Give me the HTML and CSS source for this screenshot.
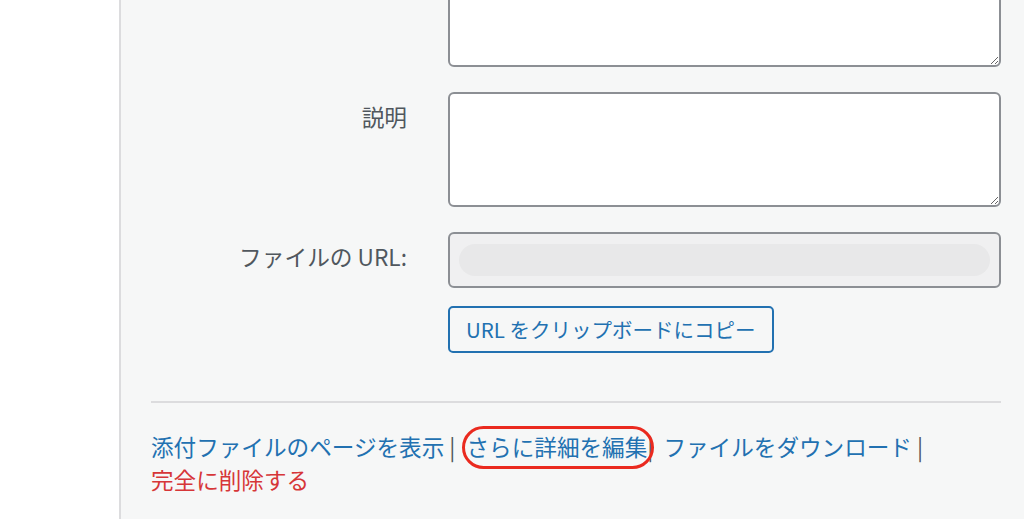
FILE: index.html
```html
<!DOCTYPE html>
<html lang="ja">
    <head>
        <meta charset="utf-8">
        <meta name="viewport" content="width=device-width, initial-scale=1.0">
        <title>添付ファイルの詳細</title>
        <link rel="stylesheet" href="styles.css">
    </head>
    <body>
        <div class="sidebar"></div>

        <div class="details">
            <div class="settings">
                <label class="setting-label" for="caption"></label>
                <textarea id="caption" class="field field-first"></textarea>

                <label class="setting-label" for="description">説明</label>
                <textarea id="description" class="field"></textarea>

                <label class="setting-label" for="file-url">ファイルの URL:</label>
                <div class="url-box">
                    <input id="file-url" class="url-input" type="text" readonly>
                </div>

                <span></span>
                <div class="copy-row">
                    <button class="copy-button" type="button">URL をクリップボードにコピー</button>
                </div>
            </div>

            <hr class="divider">

            <div class="actions">
                <a href="#" class="link">添付ファイルのページを表示</a>
                <span class="sep">|</span>
                <a href="#" class="link marked">さらに詳細を編集</a><span class="sep sep-tight">|</span>
                <a href="#" class="link">ファイルをダウンロード</a>
                <span class="sep">|</span>
                <br>
                <button type="button" class="delete-link">完全に削除する</button>
            </div>
        </div>
    </body>
</html>
```

FILE: styles.css
```css
html, body {
    margin:0;
    height:100%;
}

body {
    display:flex;
    overflow:hidden;
    font-family:"Noto Sans CJK JP", "Liberation Sans", sans-serif;
    font-size:22.6px;
    color:#50575e;
}

.sidebar {
    width:119px;
    flex-shrink:0;
    background-color:#fff;
    border-right:2px solid #dcdcde;
}

.details {
    flex:1;
    background-color:#f6f7f7;
    padding:0 23px 0 30px;
}

.settings {
    display:grid;
    grid-template-columns:256px 1fr;
    column-gap:41px;
    row-gap:25px;
    margin-top:-48px;
}

.setting-label {
    text-align:right;
    padding-top:10px;
    line-height:30px;
    font-size:22.7px;
}

.field {
    display:block;
    box-sizing:border-box;
    width:100%;
    height:115px;
    margin:0;
    border:2px solid #8c8f94;
    border-radius:6px;
    background-color:#fff;
    font:inherit;
}

.url-box {
    box-sizing:border-box;
    height:56px;
    padding:10px 9px;
    border:2px solid #8c8f94;
    border-radius:6px;
    background-color:#f0f0f1;
}

.url-input {
    display:block;
    box-sizing:border-box;
    width:100%;
    height:32px;
    margin:0;
    border:none;
    border-radius:16px;
    background-color:#e8e8e9;
    outline:none;
}

.copy-row {
    margin-top:-7px;
}

.copy-button {
    box-sizing:border-box;
    height:47px;
    padding:0 16px;
    border:2px solid #2271b1;
    border-radius:5px;
    background-color:transparent;
    color:#2271b1;
    font:inherit;
    font-size:20.5px;
    line-height:1;
}

.divider {
    margin:48px 0 0 0;
    border:none;
    border-top:2px solid #dcdcde;
}

.actions {
    margin-top:27px;
    line-height:33px;
}

.link {
    color:#2271b1;
    text-decoration:none;
}

.sep {
    color:#50575e;
}

.sep-tight {
    margin-right:5px;
}

.marked {
    position:relative;
    margin-left:6px;
}

.marked::after {
    content:"";
    position:absolute;
    left:-5px;
    right:-7px;
    top:-4px;
    bottom:-6px;
    border:3px solid #ea2a1f;
    border-radius:22px;
}

.delete-link {
    padding:0;
    border:none;
    background:none;
    color:#d63638;
    font:inherit;
    line-height:33px;
}
```
